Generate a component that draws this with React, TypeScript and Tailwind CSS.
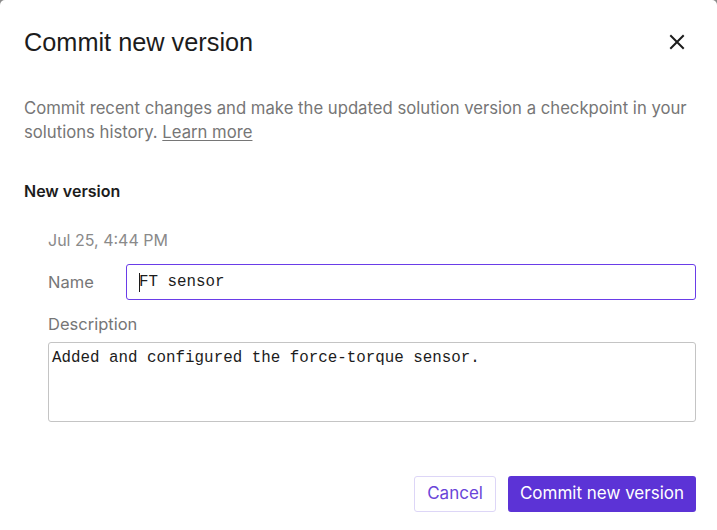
import React from "react";

export default function App() {
  return (
    <div className="w-[717px] h-[530px] bg-[#8c8c8c] overflow-hidden">
      <div
        className="w-full h-full bg-white rounded-t-[5px] pl-6 pr-[21px] text-[#1c1c1c]"
        style={{ fontFamily: "Inter, 'Noto Sans', sans-serif" }}
      >
        <div className="pt-[26px] h-[58px] flex items-center justify-between">
          <h1
            className="text-[25.3px] leading-[32px] text-[#1c1c1c]"
            style={{ fontFamily: "'Liberation Sans', Arial, sans-serif" }}
          >
            Commit new version
          </h1>
          <button className="w-[24px] h-[24px] flex items-center justify-center mr-[7px]" aria-label="Close">
            <svg width="16" height="16" viewBox="0 0 16 16" fill="none">
              <path d="M2 2L14 14M14 2L2 14" stroke="#1c1c1c" strokeWidth="2" strokeLinecap="square" />
            </svg>
          </button>
        </div>

        <p className="mt-[38px] pr-2 text-[16.7px] leading-[24px] text-[#767676]">
          Commit recent changes and make the updated solution version a checkpoint in your solutions history.{" "}
          <a className="underline underline-offset-2 text-[#767676]">Learn more</a>
        </p>

        <h2 className="mt-[35px] text-[16px] leading-[24px] font-semibold text-[#1c1c1c]">New version</h2>

        <div className="pl-6">
          <div className="mt-[25px] text-[16px] leading-[24px] text-[#8a8a8a]">Jul 25, 4:44 PM</div>

          <div className="mt-[12px] flex items-center">
            <label className="w-[78px] text-[16.5px] leading-[24px] text-[#767676]">Name</label>
            <div className="relative flex-1 flex">
              <input
                defaultValue="FT sensor"
                className="flex-1 h-[36px] rounded-[3px] border-[1.5px] border-[#6a3de8] px-[12px] text-[15.85px] text-[#1c1c1c] outline-none"
                style={{ fontFamily: "'Liberation Mono', monospace" }}
              />
              <span className="absolute left-[13px] top-[9px] h-[19px] w-px bg-[#1c1c1c]" />
            </div>
          </div>

          <div className="mt-[12px] text-[16.5px] leading-[24px] text-[#767676]">Description</div>

          <textarea
            defaultValue="Added and configured the force-torque sensor."
            className="mt-[6px] block w-full h-[80px] resize-none rounded-[3px] border border-[#c4c4c4] px-[3px] py-[3px] text-[15.85px] leading-[24px] text-[#1c1c1c] outline-none"
            style={{ fontFamily: "'Liberation Mono', monospace" }}
          />
        </div>

        <div className="mt-[54px] flex justify-end gap-3">
          <button className="h-[36px] px-[12px] rounded-[3px] border border-[#ddd6f7] text-[17px] text-[#6a45d8] bg-white">
            Cancel
          </button>
          <button className="h-[36px] px-[12px] rounded-[3px] bg-[#5c33d6] text-[17px] text-white">
            Commit new version
          </button>
        </div>
      </div>
    </div>
  );
}
